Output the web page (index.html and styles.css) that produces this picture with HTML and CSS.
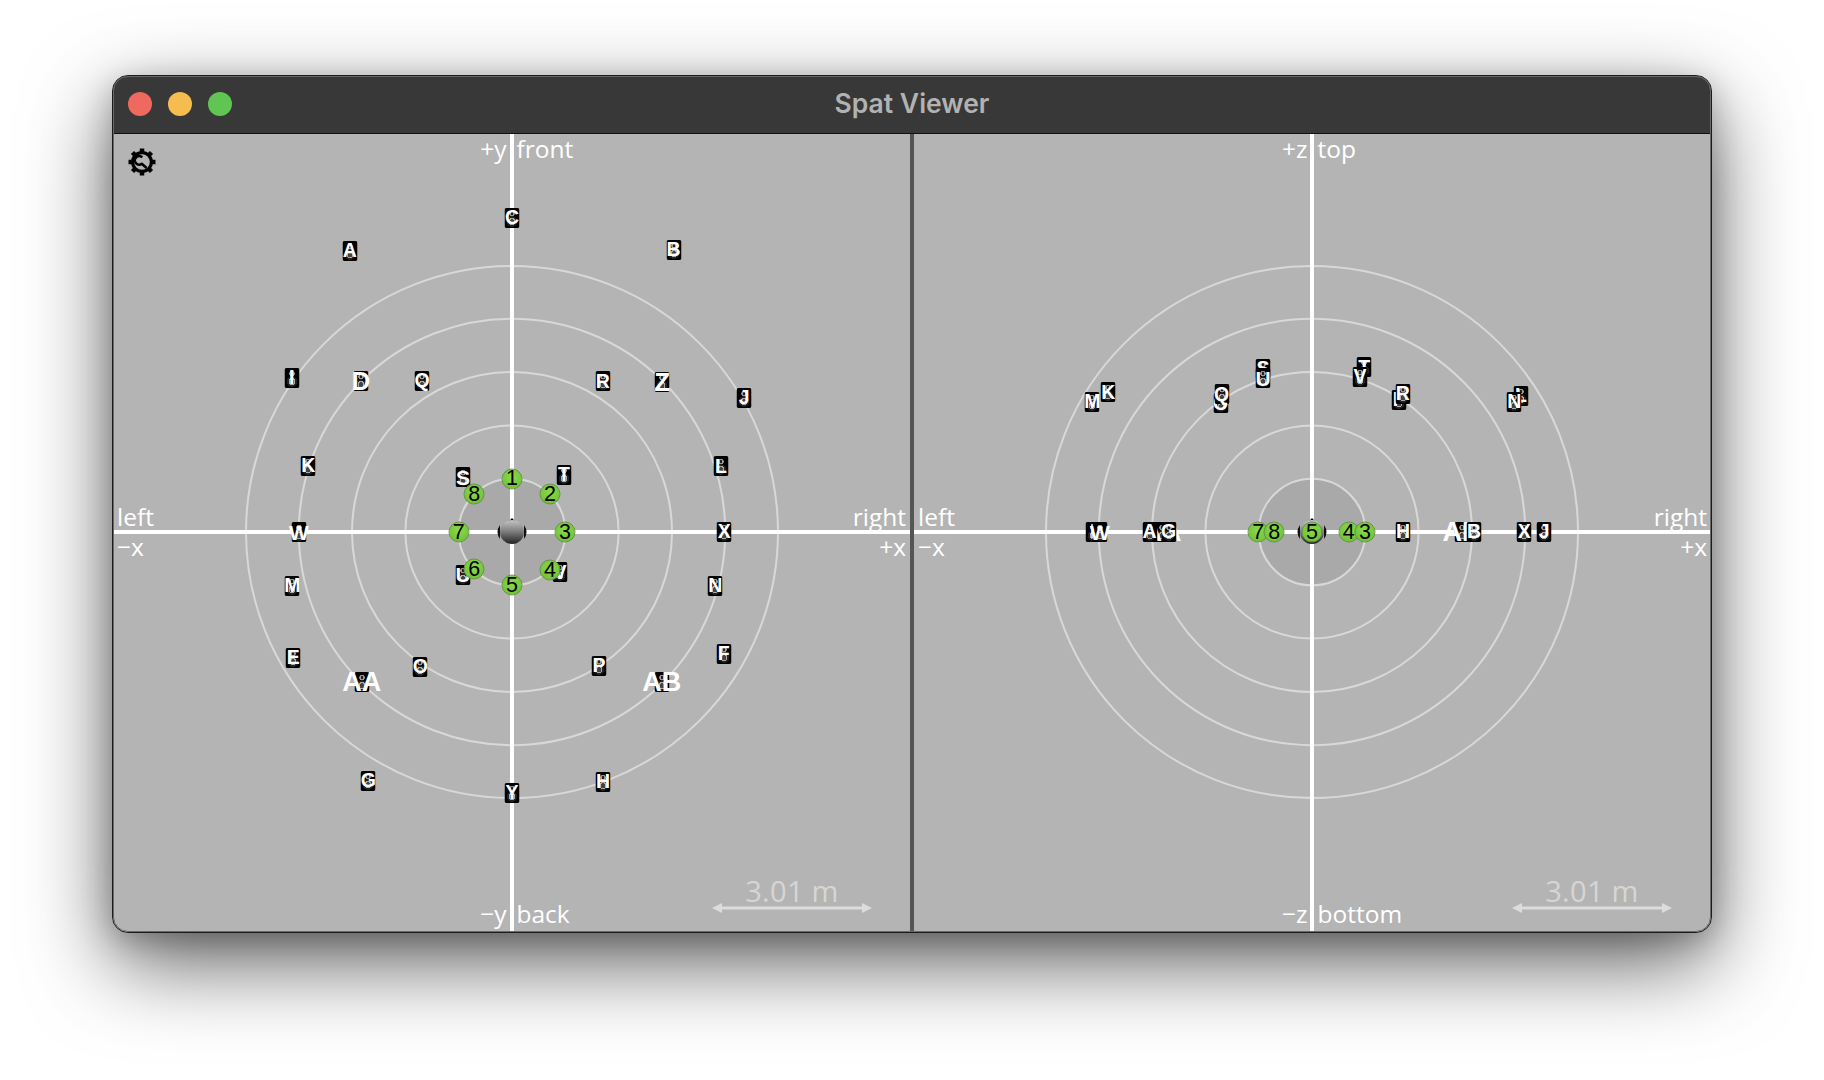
FILE: index.html
```html
<!DOCTYPE html>
<html lang="en">
<head>
<meta charset="utf-8">
<title>Spat Viewer</title>
<link rel="stylesheet" href="styles.css">
</head>
<body>
<div class="window">
  <header class="titlebar">
    <div class="lights"><span class="light red"></span><span class="light yellow"></span><span class="light green"></span></div>
    <h1 class="title">Spat Viewer</h1>
    <div></div>
  </header>
  <main class="views">
    <section class="panel panel-left">
      <svg class="canvas" viewBox="0 0 797 797" aria-hidden="true">
        <defs>
          <linearGradient id="ball" x1="0" y1="0" x2="0" y2="1">
            <stop offset="0" stop-color="#c4c4c4"/><stop offset=".45" stop-color="#828282"/><stop offset="1" stop-color="#222"/>
          </linearGradient>
        </defs>
        <circle class="disc" cx="399" cy="398" r="53.3"/>
        <circle class="ring" cx="399" cy="398" r="106.6"/>
        <circle class="ring" cx="399" cy="398" r="160"/>
        <circle class="ring" cx="399" cy="398" r="213.2"/>
        <circle class="ring" cx="399" cy="398" r="266"/>
        <rect class="axis" x="0" y="396" width="797" height="4"/>
        <rect class="axis" x="397" y="0" width="4" height="797"/>
        <path class="ear" d="M399 384l3 3h-6zM387 391q-5 7 0 14zM411 391q5 7 0 14z"/>
        <circle cx="399" cy="398" r="12" fill="url(#ball)"/>
      </svg>
      <svg class="gear" viewBox="0 0 28 28" aria-hidden="true">
        <path class="gear-teeth" d="M14 .5v27M.5 14h27M4.500 4.500l19 19M23.500 4.500l-19 19"/>
        <circle class="gear-disc" cx="14" cy="14" r="11"/>
        <circle class="gear-hole" cx="14" cy="14" r="7.800"/>
        <path class="gear-wrench" d="M14.200 9.400A4.300 4.300 0 1 0 13.800 15.800L18.600 20"/>
      </svg>
      <div class="edge-cap edge-top"><span>+y</span><span>front</span></div>
      <div class="edge-cap edge-bottom"><span>−y</span><span>back</span></div>
      <div class="side-caps"><span>left</span><span>right</span><span>−x</span><span>+x</span></div>

      <div class="spk" style="left:236.7px;top:116.7px">A</div>
      <div class="spk" style="left:560.5px;top:116px">B</div>
      <div class="spk" style="left:399px;top:84px">C</div>
      <div class="spk" style="left:178.7px;top:243.7px">I</div>
      <div class="spk big" style="left:248px;top:247px">D</div>
      <div class="spk" style="left:309px;top:247px">Q</div>
      <div class="spk" style="left:489.7px;top:247.3px">R</div>
      <div class="spk big" style="left:549.3px;top:247.7px">Z</div>
      <div class="spk" style="left:631.3px;top:263.7px">J</div>
      <div class="spk" style="left:195.3px;top:332px">K</div>
      <div class="spk" style="left:608px;top:332.3px">L</div>
      <div class="spk mid" style="left:350px;top:343px">S</div>
      <div class="spk" style="left:451px;top:341px">T</div>
      <div class="spk mid" style="left:186px;top:398px">W</div>
      <div class="spk" style="left:611.3px;top:398px">X</div>
      <div class="spk" style="left:179.3px;top:451.7px">M</div>
      <div class="spk mid" style="left:350px;top:440.7px">U</div>
      <div class="spk" style="left:447px;top:438.3px">V</div>
      <div class="spk" style="left:602.3px;top:451.7px">N</div>
      <div class="spk" style="left:180.3px;top:524px">E</div>
      <div class="spk" style="left:610.6px;top:519.8px">F</div>
      <div class="spk" style="left:307.3px;top:533px">O</div>
      <div class="spk" style="left:486px;top:531.7px">P</div>
      <div class="spk huge" style="left:248.7px;top:548.3px">AA</div>
      <div class="spk huge" style="left:548.7px;top:548.3px">AB</div>
      <div class="spk" style="left:255.3px;top:646.7px">G</div>
      <div class="spk" style="left:490px;top:648px">H</div>
      <div class="spk" style="left:399px;top:658.7px">Y</div>

      <div class="num" style="left:399px;top:344.7px">1</div>
      <div class="num" style="left:437px;top:360.3px">2</div>
      <div class="num" style="left:452px;top:398px">3</div>
      <div class="num" style="left:437px;top:436px">4</div>
      <div class="num" style="left:399px;top:451px">5</div>
      <div class="num" style="left:361.3px;top:435.3px">6</div>
      <div class="num" style="left:345.7px;top:398px">7</div>
      <div class="num" style="left:361.3px;top:360.3px">8</div>

      <div class="scale">
        <span class="scale-text">3.01 m</span>
        <svg class="scale-arrow" viewBox="0 0 160 12" aria-hidden="true"><path d="M0 6l10-5v3.500h140v-3.500l10 5-10 5v-3.500h-140v3.500z"/></svg>
      </div>
    </section>

    <div class="divider"></div>

    <section class="panel panel-right">
      <svg class="canvas" viewBox="0 0 797 797" aria-hidden="true">
        <circle class="disc" cx="398" cy="398" r="53.3"/>
        <circle class="ring" cx="398" cy="398" r="106.6"/>
        <circle class="ring" cx="398" cy="398" r="160"/>
        <circle class="ring" cx="398" cy="398" r="213.2"/>
        <circle class="ring" cx="398" cy="398" r="266"/>
        <rect class="axis" x="0" y="396" width="797" height="4"/>
        <rect class="axis" x="396" y="0" width="4" height="797"/>
        <path class="ear" d="M398 384l3 3h-6zM386 391q-5 7 0 14zM410 391q5 7 0 14z"/>
        <circle cx="398" cy="398" r="12" fill="url(#ball)"/>
      </svg>
      <div class="edge-cap edge-top"><span>+z</span><span>top</span></div>
      <div class="edge-cap edge-bottom"><span>−z</span><span>bottom</span></div>
      <div class="side-caps"><span>left</span><span>right</span><span>−x</span><span>+x</span></div>

      <div class="spk huge" style="left:248px;top:398px">AA</div>
      <div class="spk huge" style="left:548px;top:398px">AB</div>
      <div class="spk" style="left:178.7px;top:398px">I</div>
      <div class="spk mid" style="left:186px;top:398px">W</div>
      <div class="spk" style="left:235.5px;top:398px">A</div>
      <div class="spk" style="left:254.5px;top:398px">G</div>
      <div class="spk" style="left:489px;top:398px">H</div>
      <div class="spk" style="left:560px;top:398px">B</div>
      <div class="spk" style="left:610.3px;top:398px">X</div>
      <div class="spk" style="left:630.3px;top:398px">J</div>
      <div class="spk" style="left:178.3px;top:268px">M</div>
      <div class="spk" style="left:194.3px;top:258.3px">K</div>
      <div class="spk" style="left:349px;top:234.7px">S</div>
      <div class="spk mid" style="left:349px;top:244px">U</div>
      <div class="spk" style="left:306.7px;top:269.3px">O</div>
      <div class="spk" style="left:307.7px;top:260.3px">Q</div>
      <div class="spk" style="left:450.3px;top:233.3px">T</div>
      <div class="spk" style="left:446px;top:242.7px">V</div>
      <div class="spk" style="left:485.3px;top:266px">P</div>
      <div class="spk" style="left:488.7px;top:260px">R</div>
      <div class="spk" style="left:607px;top:261.7px">L</div>
      <div class="spk" style="left:600.3px;top:267.7px">N</div>

      <div class="num" style="left:344.3px;top:398px">7</div>
      <div class="num" style="left:360.3px;top:398px">8</div>
      <div class="num" style="left:398px;top:398px">5</div>
      <div class="num" style="left:434.7px;top:398px">4</div>
      <div class="num" style="left:451px;top:398px">3</div>

      <div class="scale">
        <span class="scale-text">3.01 m</span>
        <svg class="scale-arrow" viewBox="0 0 160 12" aria-hidden="true"><path d="M0 6l10-5v3.500h140v-3.500l10 5-10 5v-3.500h-140v3.500z"/></svg>
      </div>
    </section>
  </main>
</div>
</body>
</html>
```

FILE: styles.css
```css
* { box-sizing: border-box; }

html, body { margin: 0; height: 100%; }

body {
  background: #fff;
  padding: 75px 0 0 112px;
  overflow: hidden;
  font-family: "Open Sans", "Liberation Sans", sans-serif;
}

.window {
  position: relative;
  width: 1600px;
  height: 858px;
  border: 1px solid #1c1c1c;
  border-radius: 16px;
  overflow: hidden;
  display: flex;
  flex-direction: column;
  background: #b4b4b4;
  box-shadow: 0 30px 85px rgba(0, 0, 0, .62), 0 8px 30px rgba(0, 0, 0, .22);
}

.window::after {
  content: "";
  position: absolute;
  inset: 0;
  border: 1px solid #686868;
  border-radius: 15px;
  pointer-events: none;
}

.titlebar {
  height: 58px;
  flex: none;
  display: grid;
  grid-template-columns: 1fr auto 1fr;
  align-items: center;
  padding: 0 15px 2px;
  background: #383838;
  border-bottom: 1px solid #111;
}

.lights { display: flex; gap: 16px; }

.light { width: 24px; height: 24px; border-radius: 50%; }
.red { background: #ee6a5f; }
.yellow { background: #f5bd4f; }
.green { background: #61c554; }

.title {
  margin: 0;
  font: 600 26.5px/1 Inter, "Liberation Sans", sans-serif;
  color: #b2b2b2;
}

.views { flex: 1; display: flex; min-height: 0; }

.divider { width: 4px; flex: none; background: #555; }

.panel {
  position: relative;
  flex: 1;
  color: #fff;
  font-size: 24.5px;
  font-weight: 500;
  line-height: 30px;
}

.canvas { position: absolute; left: 0; top: 0; width: 797px; height: 797px; }

.disc { fill: #a9a9a9; stroke: #d8d8d8; stroke-width: 2; }
.ring { fill: none; stroke: #d8d8d8; stroke-width: 2; }
.axis { fill: #fff; }
.ear { fill: #111; }

.gear { position: absolute; left: 15px; top: 14px; width: 28px; height: 28px; }
.gear-teeth { fill: none; stroke: #000; stroke-width: 4.5; }
.gear-disc { fill: #000; }
.gear-hole { fill: #b4b4b4; }
.gear-wrench { fill: none; stroke: #000; stroke-width: 2.6; stroke-linecap: butt; stroke-linejoin: round; }

.edge-cap {
  position: absolute;
  left: 0;
  right: 0;
  display: grid;
  grid-template-columns: 1fr 1fr;
  column-gap: 10px;
}
.edge-cap span:first-child { text-align: right; }
.edge-top { top: 0; }
.edge-bottom { bottom: 3px; }

.side-caps {
  position: absolute;
  left: 0;
  right: 0;
  top: 368px;
  padding: 0 4px;
  display: grid;
  grid-template-columns: 1fr 1fr;
}
.side-caps span:nth-child(even) { text-align: right; }

.spk, .num {
  position: absolute;
  transform: translate(-50%, -50%);
  display: flex;
  align-items: center;
  justify-content: center;
  white-space: nowrap;
  font-family: "Liberation Sans", Arial, sans-serif;
}

.spk {
  width: 15px;
  height: 20px;
  border-radius: 2px;
  font-weight: 700;
  font-size: 19.5px;
  line-height: 1;
  color: #fff;
  background:
    radial-gradient(circle at 50% 28%, #222 0 1.5px, #999 1.5px 2.5px, transparent 3px),
    radial-gradient(circle at 50% 68%, #444 0 2.5px, #aaa 2.5px 3.5px, #222 3.5px 5px, transparent 5.5px),
    #000;
}
.spk.mid { font-size: 21px; }
.spk.big { font-size: 26px; }
.spk.huge { font-size: 27px; }

.num {
  width: 21px;
  height: 21px;
  border-radius: 50%;
  border: 1px solid #63993f;
  background: radial-gradient(circle at 50% 40%, #8cd94e, #6abb33);
  color: #000;
  font-size: 21.5px;
  line-height: 1;
}

.scale {
  position: absolute;
  left: 599px;
  top: 739px;
  width: 160px;
  display: flex;
  flex-direction: column;
  align-items: center;
  color: #d6d6d6;
}
.panel-right .scale { left: 598px; }

.scale-text { font-size: 29px; line-height: 36px; letter-spacing: .3px; }
.scale-arrow { width: 160px; height: 12px; margin-top: -7px; fill: #dcdcdc; display: block; }
```
